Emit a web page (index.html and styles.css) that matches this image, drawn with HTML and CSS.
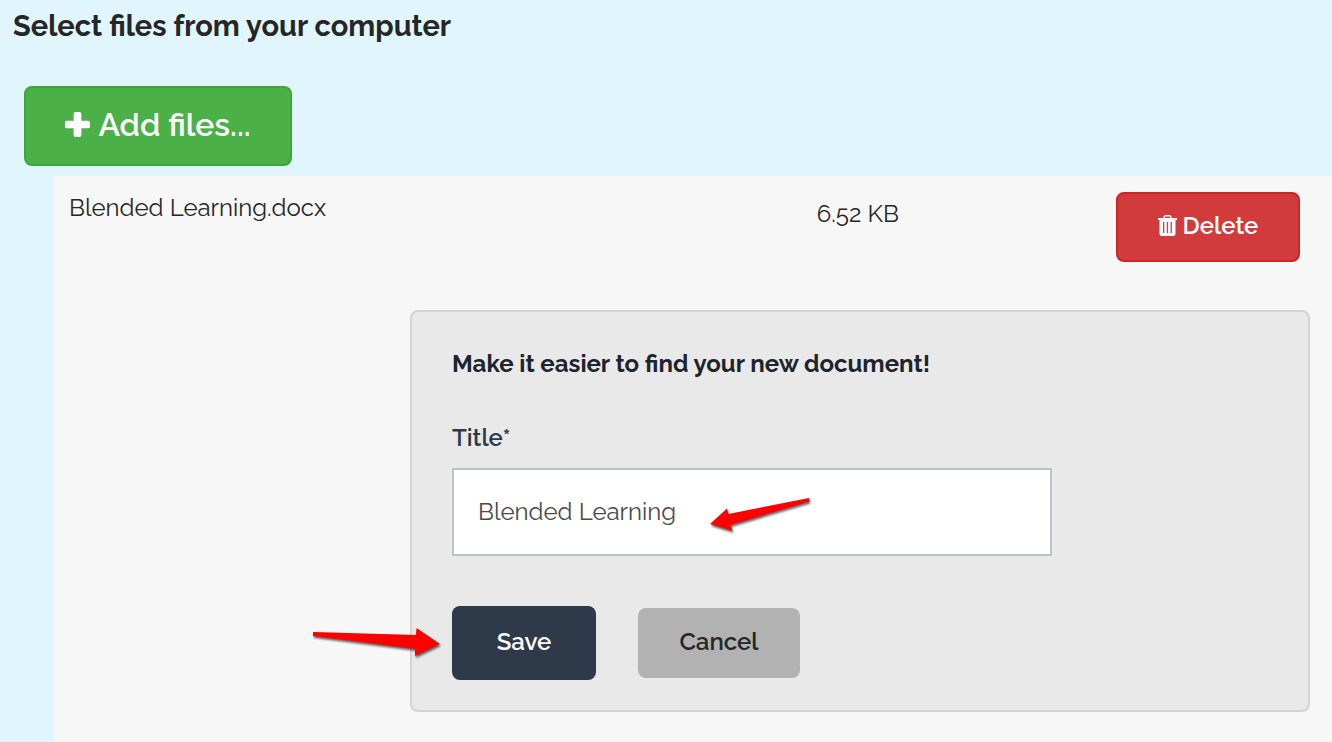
FILE: index.html
```html
<!DOCTYPE html>
<html lang="en">
<head>
    <meta charset="UTF-8">
    <meta name="viewport" content="width=device-width, initial-scale=1.0">
    <title>Select files from your computer</title>
    <link rel="stylesheet" href="styles.css">
</head>
<body>
    <h1>Select files from your computer</h1>

    <button type="button" class="btn btn-add">
        <svg class="icon-plus" viewBox="0 0 26 26" aria-hidden="true">
            <path d="M11 0h4a2 2 0 0 1 2 2v7h7a2 2 0 0 1 2 2v4a2 2 0 0 1-2 2h-7v7a2 2 0 0 1-2 2h-4a2 2 0 0 1-2-2v-7H2a2 2 0 0 1-2-2v-4a2 2 0 0 1 2-2h7V2a2 2 0 0 1 2-2z"/>
        </svg>
        <span>Add files...</span>
    </button>

    <div class="panel">
        <!-- uploaded file -->
        <div class="file-row">
            <div class="file-name">Blended Learning.docx</div>
            <div class="file-size">6.52 KB</div>
            <button type="button" class="btn btn-delete">
                <svg class="icon-trash" viewBox="0 0 19 21" aria-hidden="true">
                    <path fill-rule="evenodd" d="M0 3h5l1-2q.4-1 1.500-1h4q1.100 0 1.500 1l1 2h5v2h-1.500v13.500q0 2.500-2.500 2.500H4q-2.500 0-2.500-2.500V5H0zM6.500 3h6l-.7-1.400H7.200zM5 7v11h1.300V7zM8.800 7v11h1.300V7zM12.600 7v11h1.300V7z"/>
                </svg>
                <span>Delete</span>
            </button>
        </div>

        <!-- document details -->
        <form class="card">
            <h2>Make it easier to find your new document!</h2>
            <label for="title">Title*</label>
            <div class="field">
                <input type="text" id="title" value="Blended Learning">
                <svg class="arrow arrow-left" viewBox="0 0 104 40" aria-hidden="true">
                    <path d="M2 28L19 12.500L20.500 18L101 2L101.500 5.500L22.500 29L24.500 35z"/>
                </svg>
            </div>
            <div class="actions">
                <button type="button" class="btn btn-save">Save</button>
                <button type="button" class="btn btn-cancel">Cancel</button>
                <svg class="arrow arrow-right" viewBox="0 0 136 40" aria-hidden="true">
                    <path d="M5 8L108 11L108.500 4L132 20L107 32L107 25L5 12z"/>
                </svg>
            </div>
        </form>
    </div>
</body>
</html>
```
FILE: styles.css
```css
* {
    box-sizing: border-box;
}
body {
    font-family: Raleway, Lato, sans-serif;
    font-size: 24px;
    line-height: 32px;
    margin: 0;
    min-height: 100vh;
    display: flex;
    flex-direction: column;
    align-items: flex-start;
    color: #262626;
    background-color: #e0f5fc;
}
h1 {
    font-size: 29px;
    line-height: 36px;
    margin: 8px 13px 42px;
}
h2 {
    font-size: 24px;
    line-height: 32px;
    margin: 0 0 42px;
    color: #1d242d;
}
.btn {
    display: flex;
    align-items: center;
    justify-content: center;
    padding: 0 0 2px;
    font-family: inherit;
    font-size: 24px;
    font-weight: 600;
    line-height: 32px;
    color: #fff;
    border: 2px solid transparent;
    border-radius: 8px;
    cursor: pointer;
}
.btn svg {
    fill: currentColor;
    margin-bottom: 2px;
}
.btn-add {
    width: 268px;
    height: 80px;
    margin: 0 24px 10px;
    gap: 8px;
    font-size: 32px;
    background-color: #4bb048;
    border-color: #3da639;
}
.icon-plus {
    width: 25px;
    height: 25px;
}
.panel {
    flex: 1;
    align-self: stretch;
    margin-left: 54px;
    padding: 16px 22px 30px 15px;
    background-color: #f7f7f7;
}
.file-row {
    display: grid;
    grid-template-columns: 5fr 2fr 184px;
    margin: 0 10px 48px 0;
}
.file-size {
    padding-top: 6px;
}
.btn-delete {
    height: 70px;
    gap: 6px;
    background-color: #d13b3c;
    border-color: #cb2528;
}
.icon-trash {
    width: 19px;
    height: 21px;
}
.card {
    margin-left: 341px;
    padding: 36px 40px 30px;
    background-color: #e9e9e9;
    border: 2px solid #d3d3d3;
    border-radius: 8px;
}
label {
    display: block;
    margin-bottom: 14px;
    font-weight: 600;
    color: #2e3a4a;
}
.field {
    position: relative;
    max-width: 600px;
}
input[type="text"] {
    display: block;
    width: 100%;
    height: 88px;
    padding: 0 24px 2px;
    font-family: inherit;
    font-size: 24px;
    color: #4a4a4a;
    background-color: #fff;
    border: 2px solid #bfc3c7;
    border-radius: 0;
}
.actions {
    position: relative;
    display: flex;
    align-items: center;
    gap: 42px;
    margin-top: 50px;
}
.btn-save {
    width: 144px;
    height: 74px;
    background-color: #2e3a4a;
}
.btn-cancel {
    width: 162px;
    height: 70px;
    color: #262626;
    background-color: #b2b2b2;
}
/* pointers to the title and the save button */
.arrow {
    position: absolute;
    overflow: visible;
    fill: #ff0000;
    filter: drop-shadow(1px 2px 1px rgba(0, 0, 0, 0.6));
    pointer-events: none;
}
.arrow-left {
    left: 256px;
    top: 28px;
    width: 104px;
    height: 40px;
}
.arrow-right {
    left: -144px;
    top: 18px;
    width: 136px;
    height: 40px;
}
```
